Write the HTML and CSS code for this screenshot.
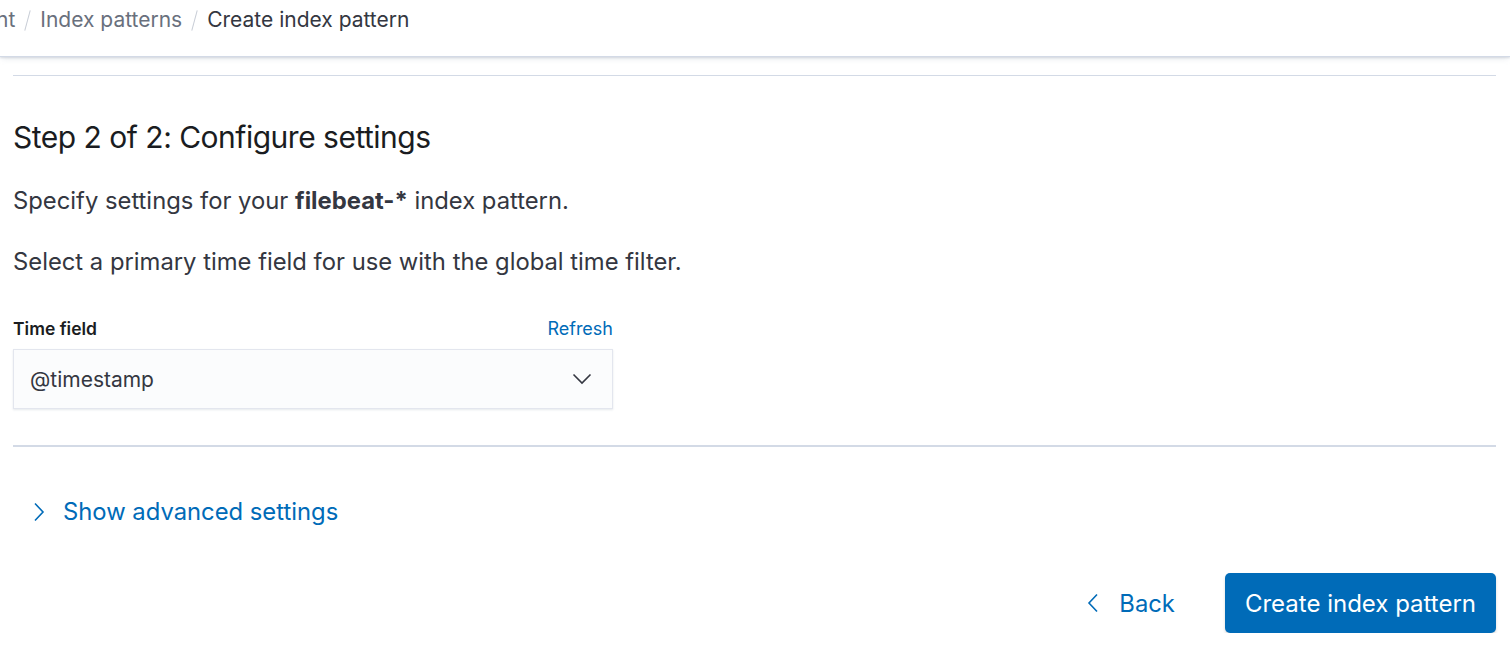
FILE: index.html
```html
<!DOCTYPE html>
<html>
<head>
<meta charset="utf-8">
<link rel="stylesheet" href="styles.css">
</head>
<body>
<header class="topbar">
  <nav class="crumbs">
    <span class="crumb link">nt</span>
    <span class="sep"></span>
    <span class="crumb link">Index patterns</span>
    <span class="sep"></span>
    <span class="crumb current">Create index pattern</span>
  </nav>
</header>
<main class="page">
  <hr class="rule thin">
  <h2 class="title">Step 2 of 2: Configure settings</h2>
  <p class="text">Specify settings for your <strong>filebeat-*</strong> index pattern.</p>
  <p class="text">Select a primary time field for use with the global time filter.</p>
  <div class="field">
    <div class="field-head">
      <label class="label">Time field</label>
      <a class="refresh">Refresh</a>
    </div>
    <div class="select">
      <span>@timestamp</span>
      <svg class="chev" width="20" height="12" viewBox="0 0 20 12"><path d="M1.5 1.5 L10 10 L18.5 1.5" fill="none" stroke="#343741" stroke-width="1.6"/></svg>
    </div>
  </div>
  <hr class="rule thick">
  <div class="advanced">
    <svg width="12" height="20" viewBox="0 0 12 20"><path d="M2 1.5 L10 10 L2 18.5" fill="none" stroke="#006bb8" stroke-width="1.6"/></svg>
    <span>Show advanced settings</span>
  </div>
  <div class="actions">
    <button class="back">
      <svg width="12" height="20" viewBox="0 0 12 20"><path d="M10 1.5 L2 10 L10 18.5" fill="none" stroke="#006bb8" stroke-width="1.6"/></svg>
      <span>Back</span>
    </button>
    <button class="primary">Create index pattern</button>
  </div>
</main>
</body>
</html>
```
FILE: styles.css
```css
* { box-sizing: border-box; }
html, body { margin: 0; padding: 0; background: #fff; }
body { font-family: Inter, "Noto Sans", sans-serif; color: #343741; }
.topbar {
  height: 57px;
  display: flex;
  align-items: flex-start;
  padding-top: 8px;
  background: #fff;
  box-shadow: 0 1px 2px rgba(152,162,179,.35), 0 4px 6px -2px rgba(152,162,179,.2);
  border-bottom: 1px solid #d3dae6;
}
.crumbs { display: flex; align-items: center; font-size: 21px; line-height: 24px; margin-left: -4px; }
.crumb.link { color: #69707d; }
.crumb.current { color: #343741; }
.sep { width: 1px; height: 21px; background: #c8cdd6; transform: rotate(15deg); margin: 0 12px; }
.page { padding: 0 14px 0 13px; }
.rule { border: 0; margin: 0; }
.rule.thin { height: 1px; background: #d3dae6; margin-top: 18px; }
.title { font-size: 30px; font-weight: 400; color: #1a1c21; margin: 44px 0 0; line-height: 34px; letter-spacing: -0.5px; }
.text { font-size: 23.8px; line-height: 30px; margin: 0; color: #343741; }
.title + .text { margin-top: 32px; }
.text + .text { margin-top: 31px; }
.text strong { font-weight: 700; }
.field { width: 600px; margin-top: 41px; }
.field-head { display: flex; justify-content: space-between; align-items: center; height: 22px; }
.label { font-size: 17.5px; font-weight: 600; color: #1a1c21; line-height: 22px; }
.refresh { font-size: 18px; color: #006bb8; line-height: 22px; }
.select {
  margin-top: 9px;
  height: 60px;
  background: #fbfcfd;
  border: 1px solid #e3e6ee;
  box-shadow: 0 1px 2px rgba(152,162,179,.25);
  display: flex;
  align-items: center;
  justify-content: space-between;
  padding: 0 20px 0 16px;
  font-size: 21px;
  color: #343741;
}
.rule.thick { height: 2px; background: #d3dae6; margin-top: 36px; }
.advanced { display: flex; align-items: center; gap: 18px; margin-top: 50px; padding-left: 20px; color: #006bb8; font-size: 23.8px; line-height: 30px; }
.actions { display: flex; justify-content: flex-end; align-items: center; gap: 50px; margin-top: 46px; }
.back { display: flex; align-items: center; gap: 20px; background: none; border: 0; color: #006bb8; font-family: inherit; font-size: 23.8px; padding: 0; }
.primary {
  background: #006bb8; color: #fff; border: 0; border-radius: 5px;
  height: 60px; padding: 0 20px; font-family: inherit; font-size: 24px;
  box-shadow: 0 2px 3px rgba(0,0,0,.15);
}
```
